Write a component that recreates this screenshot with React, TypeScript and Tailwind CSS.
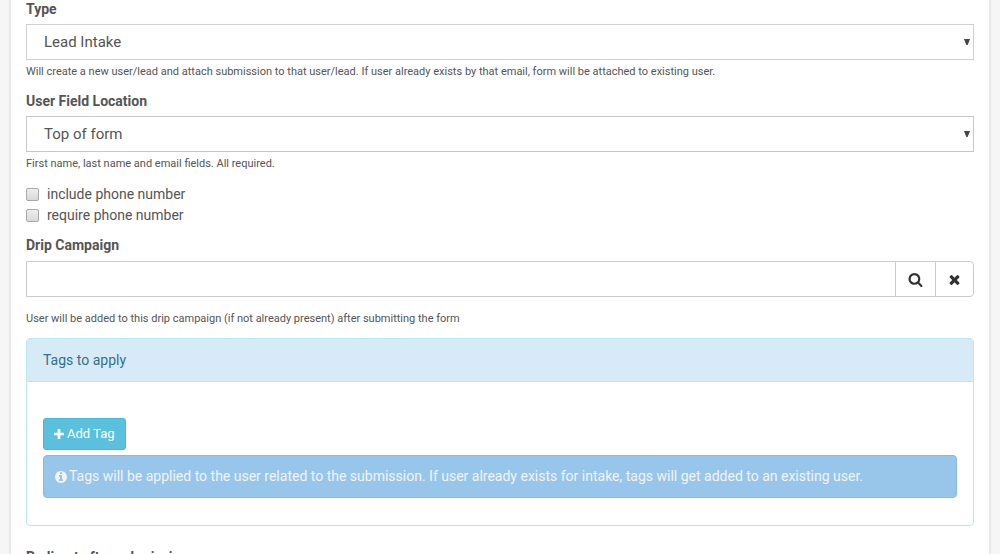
import type { ReactNode } from "react";

const ICONS = {
  search:
    "M1216 832q0-185-131.5-316.5t-316.5-131.5-316.5 131.5-131.5 316.5 131.5 316.5 316.5 131.5 316.5-131.5 131.5-316.5zm512 832q0 52-38 90t-90 38q-54 0-90-38l-343-342q-179 124-399 124-143 0-273.5-55.5t-225-150-150-225-55.5-273.5 55.5-273.5 150-225 225-150 273.5-55.5 273.5 55.5 225 150 150 225 55.5 273.5q0 220-124 399l343 343q37 37 37 90z",
  times:
    "M1490 1322q0 40-28 68l-136 136q-28 28-68 28t-68-28l-294-294-294 294q-28 28-68 28t-68-28l-136-136q-28-28-28-68t28-68l294-294-294-294q-28-28-28-68t28-68l136-136q28-28 68-28t68 28l294 294 294-294q28-28 68-28t68 28l136 136q28 28 28 68t-28 68l-294 294 294 294q28 28 28 68z",
  plus:
    "M1600 736v192q0 40-28 68t-68 28h-416v416q0 40-28 68t-68 28h-192q-40 0-68-28t-28-68v-416h-416q-40 0-68-28t-28-68v-192q0-40 28-68t68-28h416v-416q0-40 28-68t68-28h192q40 0 68 28t28 68v416h416q40 0 68 28t28 68z",
  info:
    "M1152 1376v-160q0-14-9-23t-23-9h-96v-512q0-14-9-23t-23-9h-320q-14 0-23 9t-9 23v160q0 14 9 23t23 9h96v320h-96q-14 0-23 9t-9 23v160q0 14 9 23t23 9h448q14 0 23-9t9-23zm-128-896v-160q0-14-9-23t-23-9h-192q-14 0-23 9t-9 23v160q0 14 9 23t23 9h192q14 0 23-9t9-23zm640 416q0 209-103 385.5t-279.5 279.5-385.5 103-385.5-103-279.5-279.5-103-385.5 103-385.5 279.5-279.5 385.5-103 385.5 103 279.5 279.5 103 385.5z",
};

function Icon({
  name,
  className,
  viewBox = "0 0 1792 1792",
}: {
  name: keyof typeof ICONS;
  className: string;
  viewBox?: string;
}) {
  return (
    <svg viewBox={viewBox} fill="currentColor" aria-hidden="true" className={className}>
      <path d={ICONS[name]} />
    </svg>
  );
}

function SelectField({
  id,
  label,
  value,
  help,
  className,
}: {
  id: string;
  label: string;
  value: string;
  help: string;
  className: string;
}) {
  return (
    <div className="mb-3">
      <label htmlFor={id} className="mb-1.5 block leading-[18px] font-bold">
        {label}
      </label>
      <div className="relative">
        <select
          id={id}
          className={`block h-9 w-full appearance-none border bg-white px-[17px] pt-0.5 text-[15px] ${className}`}
        >
          <option>{value}</option>
        </select>
        <svg
          viewBox="0 0 6 6"
          fill="#444"
          aria-hidden="true"
          className="pointer-events-none absolute top-[15px] right-1 h-1.5 w-1.5"
        >
          <path d="M0 0h6L3.6 6H2.4z" />
        </svg>
      </div>
      <p className="mt-[3px] text-[11px] leading-[17px]">{help}</p>
    </div>
  );
}

function Checkbox({ children }: { children: ReactNode }) {
  return (
    <label className="flex items-center gap-2 leading-[21px]">
      <input
        type="checkbox"
        className="h-[13px] w-[13px] appearance-none rounded-[2px] border border-[#a9a9a9] bg-linear-to-b from-[#eeeeee] to-[#d9d9d9]"
      />
      {children}
    </label>
  );
}

export default function App() {
  return (
    <div className="h-screen overflow-hidden bg-[#f6f6f6] px-[9px] font-['Roboto',sans-serif] text-sm text-[#555]">
      <main className="min-h-full border-x-2 border-[#e7e7e7] bg-white px-[15px]">
        <SelectField
          id="type"
          label="Type"
          value="Lead Intake"
          help="Will create a new user/lead and attach submission to that user/lead. If user already exists by that email, form will be attached to existing user."
          className="border-[#cfcfd9]"
        />
        <SelectField
          id="location"
          label="User Field Location"
          value="Top of form"
          help="First name, last name and email fields. All required."
          className="border-[#c8c8c8]"
        />

        <div className="mb-2.5">
          <Checkbox>include phone number</Checkbox>
          <Checkbox>require phone number</Checkbox>
        </div>

        <label htmlFor="drip" className="mb-[7px] block leading-[18px] font-bold">
          Drip Campaign
        </label>
        <div className="flex h-9 overflow-hidden rounded-r-sm border border-[#ccc] bg-white text-[#333]">
          <input id="drip" type="text" className="min-w-0 flex-1 px-3 outline-none" />
          <button
            type="button"
            aria-label="Search"
            className="flex w-10 items-center justify-center border-l border-[#ccc]"
          >
            <Icon name="search" className="h-[15px] w-[15px]" />
          </button>
          <button
            type="button"
            aria-label="Clear"
            className="flex w-[38px] items-center justify-center border-l border-[#ccc]"
          >
            <Icon name="times" className="h-[15px] w-[15px]" />
          </button>
        </div>
        <p className="mt-[13px] text-[11px] leading-[17px]">
          User will be added to this drip campaign (if not already present) after submitting the form
        </p>

        <section className="mt-[11px] mb-[21px] rounded-sm border border-[#bce8f1] bg-white">
          <h2 className="rounded-t-[3px] border-b border-[#bce8f1] bg-[#d7ebf6] px-4 py-[11px] leading-5 text-[#31708f]">
            Tags to apply
          </h2>
          <div className="px-4 pt-9 pb-[27px]">
            <button
              type="button"
              className="mb-[5px] flex h-8 items-center gap-[3px] rounded-[3px] border border-[#46b8da] bg-[#5bc0de] px-2.5 text-[13px] text-white"
            >
              <Icon name="plus" viewBox="192 128 1408 1408" className="h-2.5 w-2.5" />
              Add Tag
            </button>
            <div className="flex items-center gap-0.5 rounded-sm border border-[#87bbe5] bg-[#98c6ea] px-[11px] py-2.5 leading-[21px] text-[#f1f3f5]">
              <Icon name="info" viewBox="128 128 1536 1536" className="h-3 w-3 shrink-0" />
              Tags will be applied to the user related to the submission. If user already exists for
              intake, tags will get added to an existing user.
            </div>
          </div>
        </section>

        <p className="leading-5 font-bold">Redirect after submission</p>
      </main>
    </div>
  );
}
